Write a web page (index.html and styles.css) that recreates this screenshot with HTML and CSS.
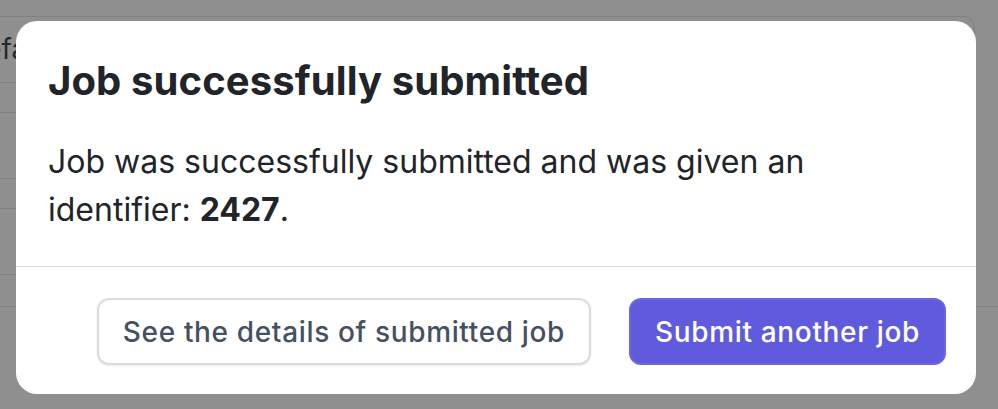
FILE: index.html
```html
<!DOCTYPE html>
<html lang="en">
<head>
<meta charset="utf-8">
<title>Job successfully submitted</title>
<link rel="stylesheet" href="styles.css">
</head>
<body>
<div class="page">
  <div class="card">
    <div class="row row-tall"><span class="cell-text">Default</span></div>
    <div class="row row-short"></div>
    <div class="row row-tall"></div>
    <div class="row row-short"></div>
    <div class="row row-tall"></div>
    <div class="row row-last"></div>
  </div>
  <div class="below"></div>
</div>

<div class="overlay">
  <div class="modal" role="dialog" aria-labelledby="modal-title">
    <div class="modal-body">
      <h2 class="modal-title" id="modal-title">Job successfully submitted</h2>
      <p class="modal-text">Job was successfully submitted and was given an identifier: <strong>2427</strong>.</p>
    </div>
    <div class="modal-footer">
      <button class="btn btn-secondary" type="button">See the details of submitted job</button>
      <button class="btn btn-primary" type="button">Submit another job</button>
    </div>
  </div>
</div>
</body>
</html>
```

FILE: styles.css
```css
* { box-sizing: border-box; }

html, body {
  margin: 0;
  padding: 0;
  width: 998px;
  height: 409px;
  overflow: hidden;
  background: #ffffff;
  font-family: Inter, "Noto Sans", sans-serif;
}

.page {
  padding-top: 16px;
}

.card {
  margin-left: -60px;
  width: 1035px;
  border: 1px solid #e3e4e6;
  border-bottom: none;
  border-radius: 12px 12px 0 0;
}

.row {
  border-bottom: 1px solid #e3e4e6;
  display: flex;
  align-items: center;
  padding-left: 24px;
}

.row-tall { height: 66px; }
.row-short { height: 30px; }
.row-last { height: 31px; border-bottom: none; }

.cell-text {
  font-size: 28px;
  color: #3a3d42;
  margin-top: -2px;
}

.below {
  border-top: 1px solid #e3e4e6;
  height: 120px;
}

.overlay {
  position: absolute;
  inset: 0;
  background: rgba(16, 17, 20, 0.47);
  padding: 21px 22px 0 16px;
}

.modal {
  width: 960px;
  background: #ffffff;
  border-radius: 21px;
  overflow: hidden;
}

.modal-body {
  padding: 32px 32px 32px;
  color: #212529;
}

.modal-title {
  margin: 0 0 29px;
  font-size: 40px;
  line-height: 56px;
  font-weight: 700;
  letter-spacing: 0.1px;
}

.modal-text {
  margin: 0;
  font-size: 32px;
  line-height: 48px;
  font-weight: 400;
}

.modal-text strong {
  font-weight: 700;
}

.modal-footer {
  border-top: 1px solid #dcd9dc;
  display: flex;
  justify-content: flex-end;
  gap: 38px;
  padding: 31px 30px 29px;
}

.btn {
  font-family: Inter, "Noto Sans", sans-serif;
  font-size: 28px;
  font-weight: 500;
  line-height: 40px;
  letter-spacing: 0.65px;
  height: 67px;
  padding: 0 24px;
  border-radius: 12px;
  cursor: pointer;
}

.btn-secondary {
  background: #ffffff;
  color: #465063;
  border: 2px solid #dcdcdf;
  box-shadow: 0 1px 2px rgba(0, 0, 0, 0.08);
}

.btn-primary {
  background: #5f5bdc;
  color: #ffffff;
  border: 2px solid #6a67e2;
}
```
